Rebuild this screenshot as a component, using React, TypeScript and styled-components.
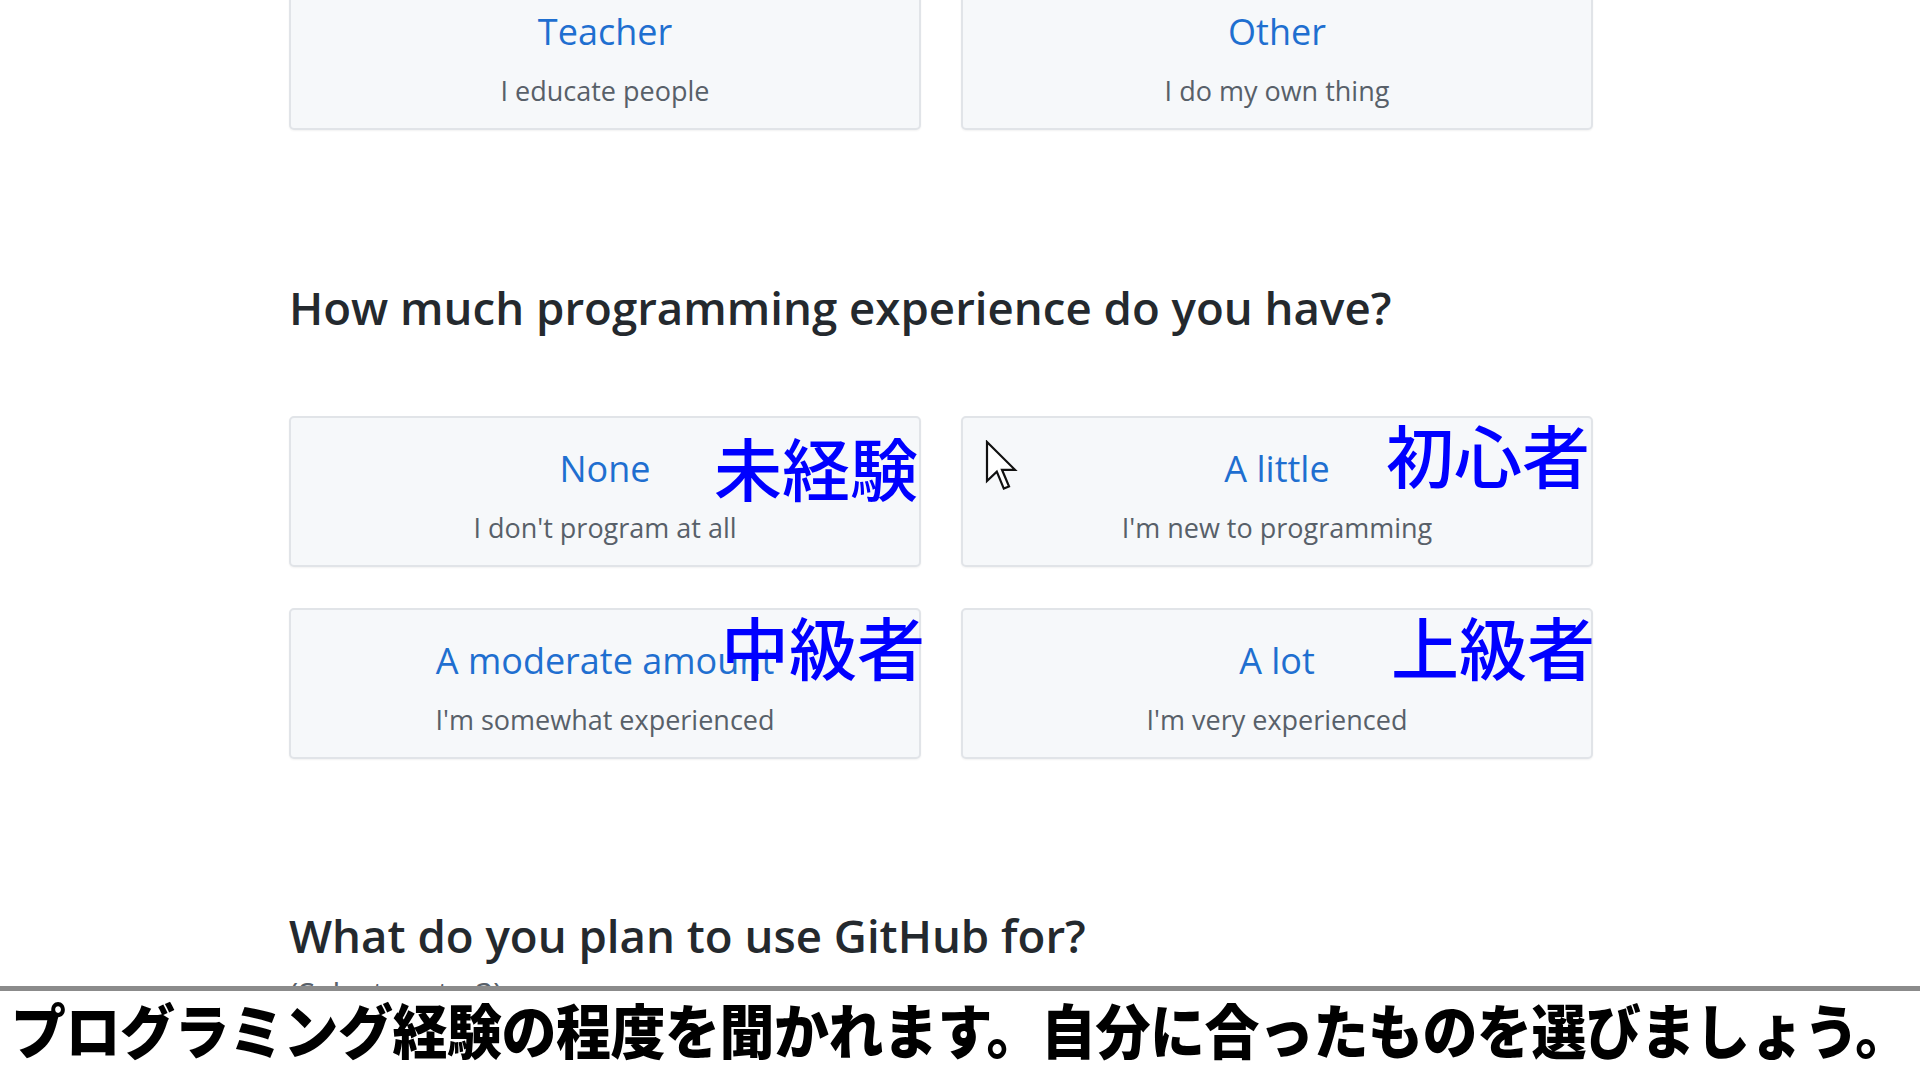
import React from "react";
import styled, { createGlobalStyle } from "styled-components";

const GlobalStyle = createGlobalStyle`
  html, body {
    margin: 0;
    padding: 0;
    background: #ffffff;
    overflow: hidden;
  }
  body {
    font-family: "Open Sans", "Noto Sans", sans-serif;
  }
`;

const Page = styled.div`
  position: relative;
  width: 1920px;
  height: 1080px;
  overflow: hidden;
  background: #ffffff;
`;

const Main = styled.main`
  margin-top: -21px;
  padding-left: 289px;
  width: 1304px;
`;

const OptionGrid = styled.div`
  display: grid;
  grid-template-columns: 632px 632px;
  column-gap: 40px;
  row-gap: 41px;
`;

const Card = styled.div`
  position: relative;
  box-sizing: border-box;
  height: 151px;
  padding-top: 29px;
  display: flex;
  flex-direction: column;
  align-items: center;
  background: #f6f8fa;
  border: 2px solid #e1e4e8;
  border-radius: 5px;
  box-shadow: 0 1px 2px rgba(27, 31, 35, 0.06);
`;

const CardTitle = styled.div`
  font-family: "Open Sans", "Noto Sans", sans-serif;
  font-size: 36px;
  line-height: 44px;
  color: #1f6fd0;
`;

const CardDesc = styled.div`
  margin-top: 19px;
  font-family: "Open Sans", "Noto Sans", sans-serif;
  font-size: 27px;
  line-height: 36px;
  color: #586069;
`;

const Heading = styled.h2<{ $top: number }>`
  margin: ${(p) => p.$top}px 0 0 0;
  font-family: "Open Sans", "Noto Sans", sans-serif;
  font-weight: 600;
  font-size: 45.6px;
  line-height: 56px;
  color: #24292e;
`;

const Section = styled.div`
  margin-top: 81px;
`;

const Note = styled.div`
  margin-top: 10px;
  font-family: "Open Sans", "Noto Sans", sans-serif;
  font-size: 31px;
  line-height: 40px;
  color: #586069;
`;

const Annotation = styled.span<{ $top: number; $right: number }>`
  position: absolute;
  top: ${(p) => p.$top}px;
  right: ${(p) => p.$right}px;
  font-family: "Noto Sans CJK JP", "Noto Sans CJK SC", sans-serif;
  font-weight: 500;
  font-size: 68px;
  line-height: 1;
  color: #0000ff;
  white-space: nowrap;
`;

const Cursor = styled.svg`
  position: absolute;
  left: 985px;
  top: 440px;
`;

const CaptionBand = styled.div`
  position: absolute;
  left: 0;
  right: 0;
  top: 986px;
  bottom: 0;
  box-sizing: border-box;
  padding: 0 0 14px 11px;
  background: #ffffff;
  border-top: 5px solid #8b8b8b;
  display: flex;
  align-items: center;
  justify-content: flex-start;
`;

const CaptionText = styled.div`
  flex: none;
  font-family: "Noto Sans CJK JP", "Noto Sans CJK SC", sans-serif;
  font-weight: 900;
  font-size: 55px;
  letter-spacing: -0.5px;
  line-height: 1;
  color: #000000;
  white-space: nowrap;
  transform: scaleY(1.08);
`;

type Option = {
  title: string;
  desc: string;
  note?: { text: string; top: number; right: number };
};

const roles: Option[] = [
  { title: "Teacher", desc: "I educate people" },
  { title: "Other", desc: "I do my own thing" },
];

const experience: Option[] = [
  { title: "None", desc: "I don't program at all", note: { text: "未経験", top: 15, right: 1 } },
  { title: "A little", desc: "I'm new to programming", note: { text: "初心者", top: 2, right: 1 } },
  { title: "A moderate amount", desc: "I'm somewhat experienced", note: { text: "中級者", top: 2, right: -6 } },
  { title: "A lot", desc: "I'm very experienced", note: { text: "上級者", top: 2, right: -4 } },
];

const OptionCard: React.FC<{ option: Option }> = ({ option }) => (
  <Card>
    <CardTitle>{option.title}</CardTitle>
    <CardDesc>{option.desc}</CardDesc>
    {option.note && (
      <Annotation $top={option.note.top} $right={option.note.right}>
        {option.note.text}
      </Annotation>
    )}
  </Card>
);

export default function App() {
  return (
    <Page>
      <GlobalStyle />
      <Main>
        <OptionGrid>
          {roles.map((o) => (
            <OptionCard key={o.title} option={o} />
          ))}
        </OptionGrid>
        <Heading $top={149}>How much programming experience do you have?</Heading>
        <Section>
          <OptionGrid>
            {experience.map((o) => (
              <OptionCard key={o.title} option={o} />
            ))}
          </OptionGrid>
        </Section>
        <Heading $top={148}>What do you plan to use GitHub for?</Heading>
        <Note>(Select up to 3)</Note>
      </Main>
      <Cursor width="34" height="54" viewBox="0 0 34 54">
        <path
          d="M2 2 L2 41 L11.8 31.6 L18.8 48.6 L24 46.4 L17 29.8 L30 29.8 Z"
          fill="#ffffff"
          stroke="#111111"
          strokeWidth="2.2"
          strokeLinejoin="miter"
        />
      </Cursor>
      <CaptionBand>
        <CaptionText>プログラミング経験の程度を聞かれます。自分に合ったものを選びましょう。</CaptionText>
      </CaptionBand>
    </Page>
  );
}
